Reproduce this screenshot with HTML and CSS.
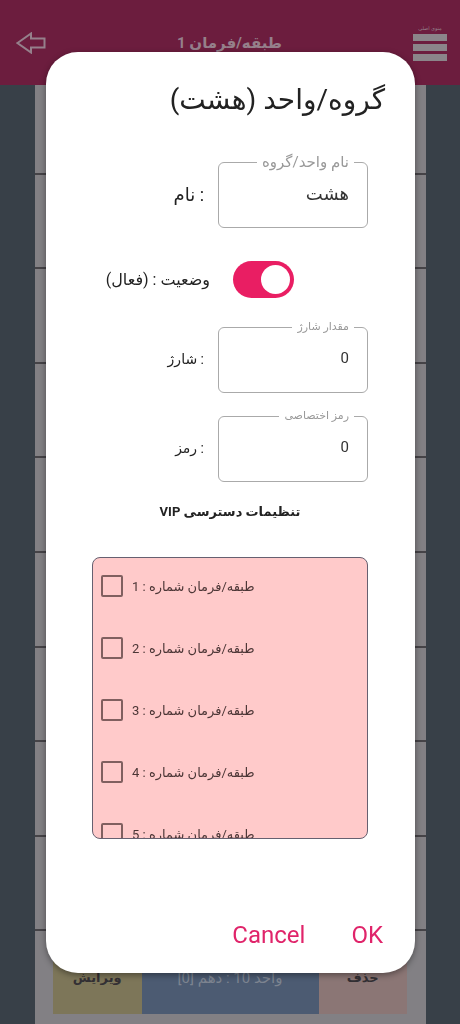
FILE: index.html
```
<!DOCTYPE html>
<html lang="fa" dir="rtl">
<head>
    <meta charset="utf-8" />
    <meta name="viewport" content="width=device-width, initial-scale=1" />
    <title>گروه/واحد</title>
    <link rel="stylesheet" href="styles.css">
</head>
<body>
    <header class="topbar">
        <button class="menu" type="button">
            <span class="menu-text">منوی اصلی</span>
            <span class="bar"></span>
            <span class="bar"></span>
            <span class="bar"></span>
        </button>
        <h1>طبقه/فرمان 1</h1>
        <button class="back" type="button" aria-label="بازگشت">
            <svg width="30" height="22" viewBox="0 0 30 22" fill="none" stroke="currentColor" stroke-width="2">
                <path d="M1.5 11 L15 1.5 V6.5 H28.5 V15.5 H15 V20.5 Z" />
            </svg>
        </button>
    </header>

    <main class="units">
        <div class="unit"></div>
        <div class="unit"></div>
        <div class="unit"></div>
        <div class="unit"></div>
        <div class="unit"></div>
        <div class="unit"></div>
        <div class="unit"></div>
        <div class="unit"></div>
        <div class="unit"></div>
        <div class="unit">
            <button class="delete" type="button">حذف</button>
            <button class="name" type="button">واحد 10 : دهم [0]</button>
            <button class="edit" type="button">ویرایش</button>
        </div>
    </main>

    <div class="overlay">
        <form class="dialog" role="dialog" aria-labelledby="dialog-title">
            <h2 id="dialog-title">گروه/واحد (هشت)</h2>

            <div class="row">
                <fieldset class="field">
                    <legend class="large">نام واحد/گروه</legend>
                    <input class="large" id="unit-name" type="text" value="هشت">
                </fieldset>
                <label class="large" for="unit-name">: نام</label>
            </div>

            <div class="row status">
                <input class="switch" id="status" type="checkbox" role="switch" checked>
                <label for="status">وضعیت : (فعال)</label>
            </div>

            <div class="row">
                <fieldset class="field">
                    <legend>مقدار شارژ</legend>
                    <input id="charge" type="text" value="0">
                </fieldset>
                <label for="charge">: شارژ</label>
            </div>

            <div class="row">
                <fieldset class="field">
                    <legend>رمز اختصاصی</legend>
                    <input id="code" type="text" value="0">
                </fieldset>
                <label for="code">: رمز</label>
            </div>

            <h3>تنظیمات دسترسی VIP</h3>

            <div class="access">
                <label class="item"><input type="checkbox"><span dir="rtl">طبقه/فرمان شماره : 1</span></label>
                <label class="item"><input type="checkbox"><span dir="rtl">طبقه/فرمان شماره : 2</span></label>
                <label class="item"><input type="checkbox"><span dir="rtl">طبقه/فرمان شماره : 3</span></label>
                <label class="item"><input type="checkbox"><span dir="rtl">طبقه/فرمان شماره : 4</span></label>
                <label class="item"><input type="checkbox"><span dir="rtl">طبقه/فرمان شماره : 5</span></label>
            </div>

            <div class="actions">
                <button type="button">OK</button>
                <button type="button">Cancel</button>
            </div>
        </form>
    </div>
</body>
</html>
```
FILE: styles.css
```
* {
    box-sizing: border-box;
}

body {
    display: flex;
    flex-direction: column;
    height: 100vh;
    margin: 0;
    overflow: hidden;
    font-family: Roboto, "DejaVu Sans", sans-serif;
    font-size: 14px;
    background-color: #384048;
    color: #222;
}

button {
    border: 0;
    padding: 0;
    background: none;
    font-family: inherit;
    cursor: pointer;
}

/* page behind the dialog */
.topbar {
    display: flex;
    justify-content: space-between;
    align-items: center;
    flex: none;
    height: 85px;
    padding: 0 13px 0 16px;
    background-color: #6c1d3e;
    color: #95808b;
}

.topbar h1 {
    margin: 0;
    font-size: 15px;
}

.menu {
    display: flex;
    flex-direction: column;
    gap: 3px;
    width: 34px;
    color: inherit;
}

.menu-text {
    font-size: 5px;
    line-height: 6px;
    white-space: nowrap;
}

.bar {
    height: 7px;
    background: #8b858a;
}

.back {
    display: flex;
    color: inherit;
}

.units {
    display: flex;
    flex-direction: column;
    flex: 1;
    margin: -5px 34px 0 35px;
    background-color: #828084;
    z-index: -1;
}

.unit {
    display: flex;
    flex: 1;
    padding: 10px 19px 10px 18px;
    border-bottom: 2px solid #454347;
}

.unit:last-child {
    border: 0;
}

.unit button {
    flex: 1;
    font-size: 13px;
    font-weight: bold;
    color: #333034;
}

.unit .delete {
    background: #8b7675;
}

.unit .name {
    flex: 2;
    font-size: 15px;
    font-weight: normal;
    background: #4c5b72;
    color: #7d8490;
}

.unit .edit {
    background: #7d7659;
}

/* dialog */
.overlay {
    position: fixed;
    inset: 0;
    display: flex;
    padding: 52px 45px 51px 46px;
}

.dialog {
    display: flex;
    flex-direction: column;
    flex: 1;
    padding: 28px 47px 20px 46px;
    border-radius: 32px;
    background: #fff;
    box-shadow: 0 2px 6px #0006;
}

.dialog h2 {
    margin: 0 -17px 34px;
    font-size: 28px;
    font-weight: normal;
    line-height: 40px;
}

.row {
    display: flex;
    align-items: center;
    gap: 14px;
    margin-bottom: 15px;
}

.row label {
    padding-top: 6px;
}

.field {
    width: 150px;
    height: 74px;
    margin: 0;
    padding: 0 13px;
    border: 1px solid #aaa;
    border-radius: 6px;
}

.field legend {
    padding: 0 5px;
    font-size: 11px;
    line-height: 16px;
    color: #999;
}

.field legend.large {
    font-size: 15px;
}

.field input {
    width: 100%;
    height: 46px;
    padding: 0 5px;
    border: 0;
    outline: 0;
    background: none;
    font-family: inherit;
    font-size: 15px;
    color: #333;
}

.row .large {
    font-size: 18px;
}

.row legend.large {
    font-size: 15px;
}

.field input.large {
    font-size: 18px;
}

.status {
    gap: 23px;
    margin: 18px 74px 21px 0;
}

.status label {
    padding: 0;
    font-size: 16px;
}

.switch {
    appearance: none;
    display: flex;
    justify-content: flex-start;
    align-items: center;
    width: 61px;
    height: 37px;
    margin: 0;
    padding: 0 4px;
    border-radius: 19px;
    background: #e91e63;
}

.switch::before {
    content: "";
    width: 29px;
    height: 29px;
    border-radius: 50%;
    background: #fff;
}

.dialog h3 {
    margin: 5px 0 35px;
    font-size: 13px;
    line-height: 20px;
    text-align: center;
}

.access {
    display: flex;
    flex-direction: column;
    gap: 6px;
    height: 282px;
    overflow: hidden;
    border: 1px solid #666070;
    border-radius: 8px;
    background: #ffcaca;
    direction: ltr;
}

.item {
    display: flex;
    flex: none;
    align-items: center;
    gap: 9px;
    height: 56px;
    padding-left: 8px;
    font-size: 13px;
    color: #4c3636;
}

.item input {
    appearance: none;
    width: 22px;
    height: 22px;
    margin: 0;
    border: 2px solid #805f5f;
    border-radius: 2px;
}

.actions {
    display: flex;
    gap: 46px;
    margin: auto -15px 0;
}

.actions button {
    font-size: 24px;
    line-height: 36px;
    color: #e0246a;
}
```
